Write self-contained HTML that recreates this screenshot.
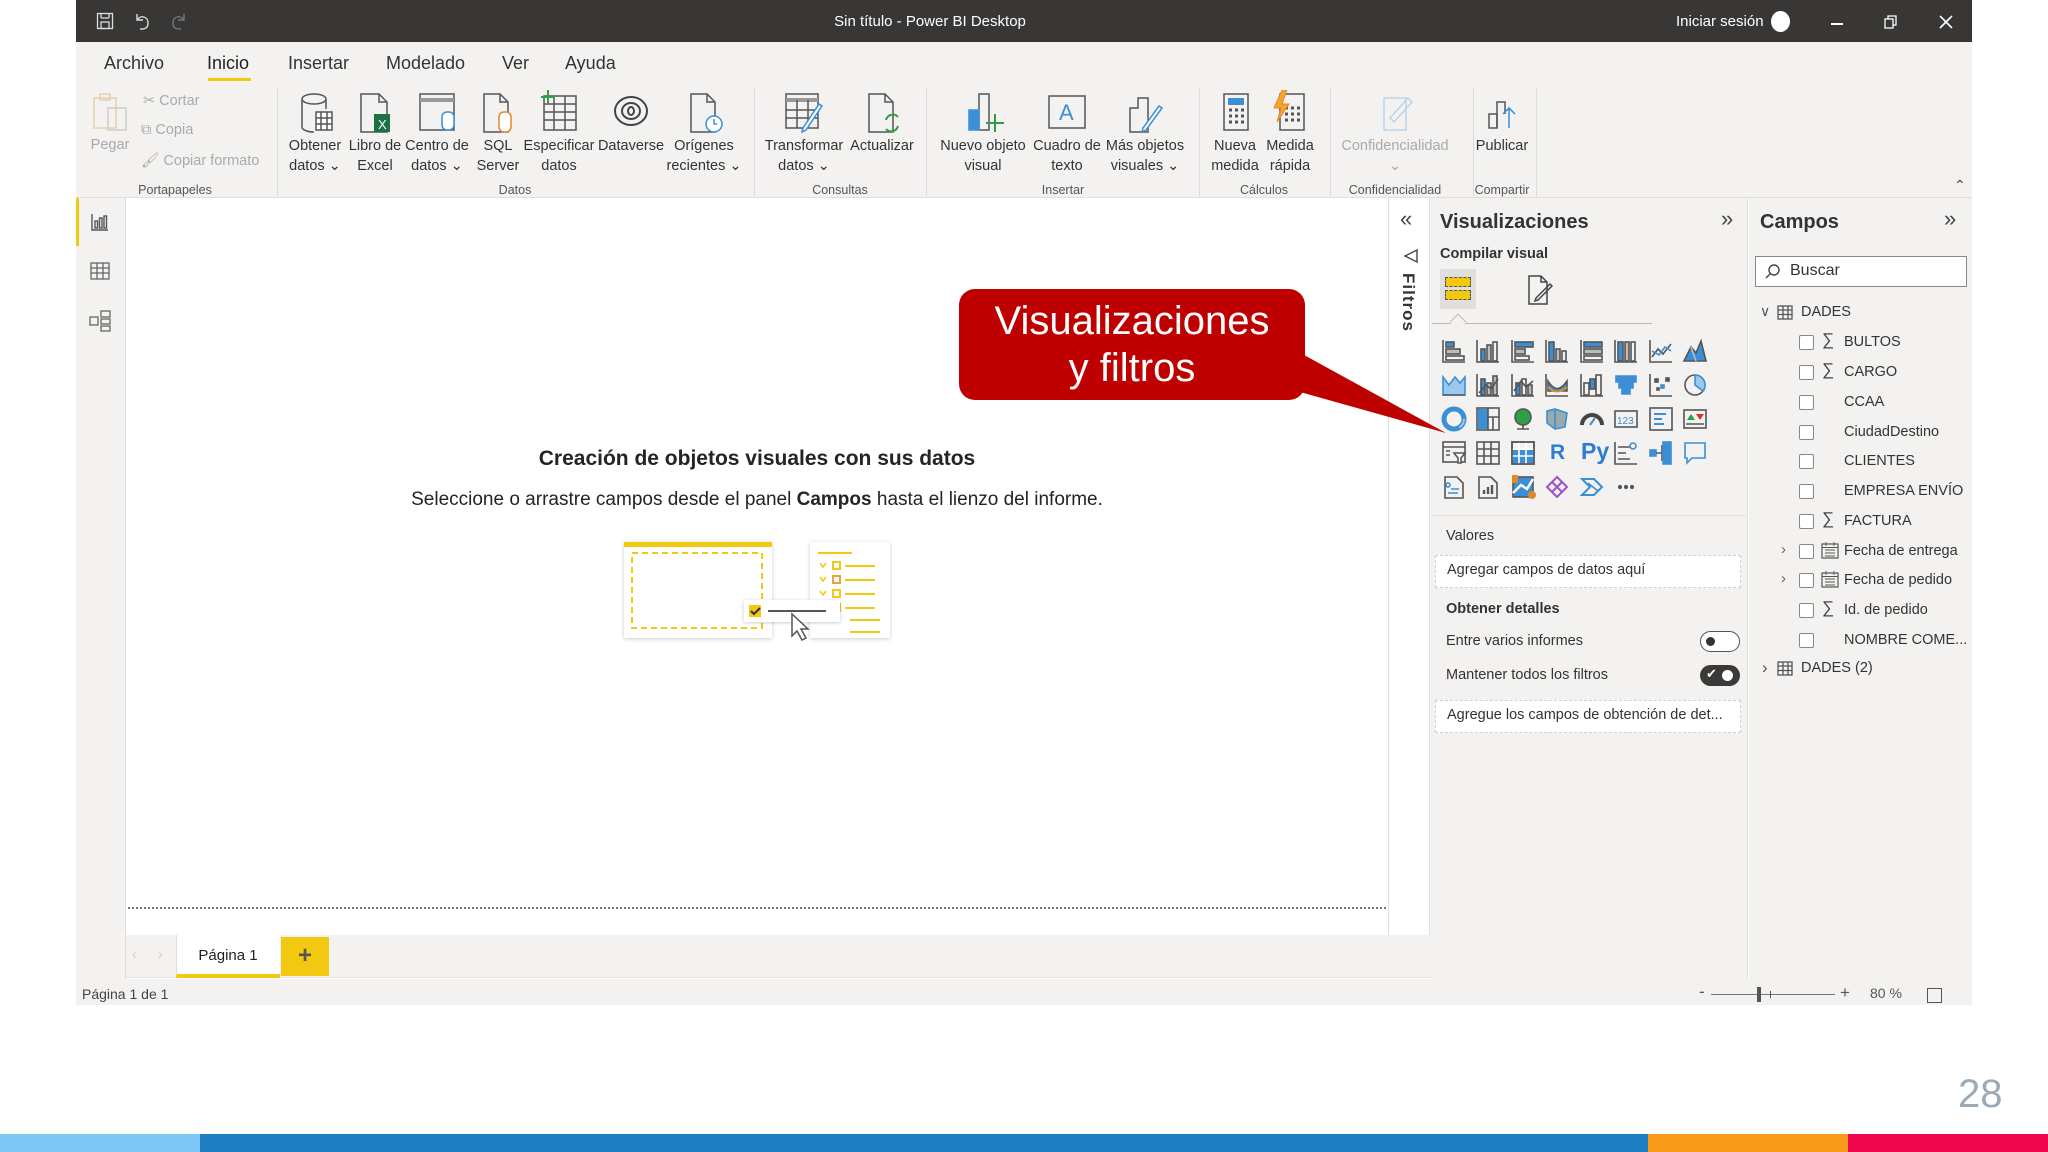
<!DOCTYPE html>
<html><head><meta charset="utf-8">
<style>
*{margin:0;padding:0;box-sizing:border-box}
body{width:2048px;height:1152px;background:#fff;position:relative;overflow:hidden;font-family:"Liberation Sans",sans-serif;color:#252423}
.a{position:absolute}
.t{position:absolute;white-space:nowrap}
.rb{position:absolute;text-align:center;font-size:14.5px;line-height:20px;color:#333;white-space:nowrap;transform:translateX(-50%)}
.gl{position:absolute;font-size:12.5px;color:#555;transform:translateX(-50%);white-space:nowrap}
.sep{position:absolute;top:88px;width:1px;height:108px;background:#dcdcdc}
.cb{position:absolute;left:1799px;width:15px;height:15px;border:1.3px solid #8a8886;border-radius:2px;background:#fff}
.fl{position:absolute;left:1844px;font-size:14.5px;color:#333}
.sg{position:absolute;left:1822px;font-size:17px;color:#444}
</style></head><body>

<div class="a" style="left:76px;top:0;width:1896px;height:42px;background:#383736"></div>
<svg class="a" style="left:96px;top:12px" width="18" height="18" viewBox="0 0 18 18" fill="none" stroke="#ddd" stroke-width="1.3"><rect x="1.5" y="1.5" width="15" height="15"/><rect x="5" y="10" width="8" height="6.5"/><line x1="5" y1="1.5" x2="5" y2="6"/><line x1="13" y1="1.5" x2="13" y2="6"/><line x1="5" y1="6" x2="13" y2="6"/></svg>
<svg class="a" style="left:133px;top:11px" width="18" height="20" viewBox="0 0 18 20" fill="none" stroke="#ddd" stroke-width="1.4"><path d="M4 3v6h6"/><path d="M4 9c3-5 11-4 11 3s-6 6-8 6"/></svg>
<svg class="a" style="left:170px;top:11px" width="18" height="20" viewBox="0 0 18 20" fill="none" stroke="#777" stroke-width="1.4"><path d="M14 3v6H8"/><path d="M14 9c-3-5-11-4-11 3s6 6 8 6"/></svg>
<div class="t" style="left:0;width:1860px;text-align:center;top:13px;font-size:15px;color:#fff">Sin título - Power BI Desktop</div>
<div class="t" style="left:1676px;top:13px;font-size:15px;color:#fff">Iniciar sesión</div>
<div class="a" style="left:1771px;top:11px;width:19px;height:21px;border-radius:50%;background:#fff"></div>
<div class="a" style="left:1831px;top:23px;width:12px;height:1.5px;background:#fff"></div>
<svg class="a" style="left:1884px;top:15px" width="14" height="14" viewBox="0 0 14 14" fill="none" stroke="#fff" stroke-width="1.3"><rect x="1" y="4" width="8" height="9"/><path d="M4 4V1h8v9H9"/></svg>
<svg class="a" style="left:1939px;top:15px" width="14" height="14" viewBox="0 0 14 14" stroke="#fff" stroke-width="1.6"><path d="M1 1l12 12M13 1L1 13"/></svg>

<div class="a" style="left:76px;top:42px;width:1896px;height:156px;background:#f3f2f1;border-bottom:1px solid #e1dfdd"></div>
<div class="t" style="left:104px;top:53px;font-size:18px;color:#333">Archivo</div>
<div class="t" style="left:207px;top:53px;font-size:18px;color:#222">Inicio</div>
<div class="a" style="left:208px;top:78px;width:43px;height:3px;background:#f2c811"></div>
<div class="t" style="left:288px;top:53px;font-size:18px;color:#333">Insertar</div>
<div class="t" style="left:386px;top:53px;font-size:18px;color:#333">Modelado</div>
<div class="t" style="left:502px;top:53px;font-size:18px;color:#333">Ver</div>
<div class="t" style="left:565px;top:53px;font-size:18px;color:#333">Ayuda</div>

<svg class="a" style="left:90px;top:92px" width="40" height="40" viewBox="0 0 40 40" fill="none" stroke="#e8cfae" stroke-width="1.5"><rect x="4" y="6" width="22" height="30"/><rect x="10" y="2" width="10" height="6"/><rect x="18" y="16" width="18" height="22" stroke="#ccc"/></svg>
<div class="rb" style="left:110px;top:135px;color:#aaa">Pegar</div>
<div class="t" style="left:143px;top:93px;font-size:14.5px;color:#aaa">✂ Cortar</div>
<div class="t" style="left:141px;top:122px;font-size:14.5px;color:#aaa">⧉ Copia</div>
<div class="t" style="left:141px;top:152px;font-size:14.5px;color:#aaa">🖌 Copiar formato</div>
<div class="gl" style="left:175px;top:183px">Portapapeles</div>
<div class="sep" style="left:277px"></div>

<svg class="a" style="left:298px;top:92px" width="40" height="42" viewBox="0 0 40 42" fill="none" stroke="#555" stroke-width="1.5"><ellipse cx="16" cy="7" rx="12" ry="5"/><path d="M4 7v28c0 3 6 5 12 5M28 7v10"/><rect x="18" y="20" width="16" height="18" fill="#fff"/><path d="M18 26h16M18 32h16M23 20v18M29 20v18"/></svg>
<div class="rb" style="left:315px;top:136px">Obtener<br>datos ⌄</div>
<svg class="a" style="left:358px;top:92px" width="36" height="42" viewBox="0 0 36 42" fill="none" stroke="#555" stroke-width="1.5"><path d="M3 2h18l8 8v30H3z"/><path d="M21 2v8h8"/><rect x="16" y="22" width="16" height="18" fill="#1e7145" stroke="none"/><text x="20" y="37" font-size="13" fill="#fff" stroke="none" font-family="Liberation Sans">X</text></svg>
<div class="rb" style="left:375px;top:136px">Libro de<br>Excel</div>
<svg class="a" style="left:418px;top:92px" width="40" height="42" viewBox="0 0 40 42" fill="none" stroke="#555" stroke-width="1.5"><rect x="2" y="2" width="34" height="36"/><path d="M2 8h34" stroke-width="4" stroke="#999"/><rect x="24" y="20" width="12" height="18" rx="5" stroke="#3a8fd6" fill="#fff"/></svg>
<div class="rb" style="left:437px;top:136px">Centro de<br>datos ⌄</div>
<svg class="a" style="left:481px;top:92px" width="36" height="42" viewBox="0 0 36 42" fill="none" stroke="#555" stroke-width="1.5"><path d="M3 2h16l8 8v30H3z"/><path d="M19 2v8h8"/><rect x="18" y="20" width="12" height="20" rx="5" stroke="#e08a2c" fill="#fff"/></svg>
<div class="rb" style="left:498px;top:136px">SQL<br>Server</div>
<svg class="a" style="left:540px;top:90px" width="40" height="44" viewBox="0 0 40 44" fill="none" stroke="#555" stroke-width="1.5"><rect x="4" y="6" width="32" height="34"/><path d="M4 14h32M4 22h32M4 30h32M14 6v34M25 6v34"/><path d="M8 0v14M1 7h14" stroke="#2f9e44" stroke-width="2"/></svg>
<div class="rb" style="left:559px;top:136px">Especificar<br>datos</div>
<svg class="a" style="left:612px;top:94px" width="38" height="34" viewBox="0 0 38 34" fill="none" stroke="#444" stroke-width="2"><ellipse cx="19" cy="17" rx="16" ry="14"/><ellipse cx="19" cy="17" rx="9" ry="8"/><ellipse cx="19" cy="17" rx="3" ry="4"/></svg>
<div class="rb" style="left:631px;top:136px">Dataverse</div>
<svg class="a" style="left:688px;top:92px" width="36" height="42" viewBox="0 0 36 42" fill="none" stroke="#555" stroke-width="1.5"><path d="M3 2h16l8 8v30H3z"/><path d="M19 2v8h8"/><circle cx="26" cy="32" r="8" stroke="#3a8fd6" fill="#fff"/><path d="M26 27v5h3" stroke="#3a8fd6"/></svg>
<div class="rb" style="left:704px;top:136px">Orígenes<br>recientes ⌄</div>
<div class="sep" style="left:754px"></div>

<svg class="a" style="left:784px;top:92px" width="42" height="42" viewBox="0 0 42 42" fill="none" stroke="#555" stroke-width="1.5"><rect x="2" y="2" width="32" height="34"/><path d="M2 8h32" stroke-width="4" stroke="#999"/><path d="M2 18h32M2 26h32M13 8v28M24 8v28"/><path d="M38 14L22 38l-4 2 1-4 16-24z" stroke="#3a8fd6" fill="#fff"/></svg>
<div class="rb" style="left:804px;top:136px">Transformar<br>datos ⌄</div>
<svg class="a" style="left:866px;top:92px" width="36" height="42" viewBox="0 0 36 42" fill="none" stroke="#555" stroke-width="1.5"><path d="M3 2h16l8 8v30H3z"/><path d="M19 2v8h8"/><path d="M20 28a7 7 0 0 1 12-3M32 34a7 7 0 0 1-12 3" stroke="#2f9e44" stroke-width="2"/></svg>
<div class="rb" style="left:882px;top:136px">Actualizar</div>
<div class="sep" style="left:926px"></div>

<svg class="a" style="left:965px;top:92px" width="40" height="42" viewBox="0 0 40 42" fill="none" stroke="#555" stroke-width="1.5"><rect x="14" y="2" width="10" height="36"/><rect x="4" y="18" width="10" height="20" fill="#3a8fd6" stroke="#3a8fd6"/><path d="M30 22v18M21 31h18" stroke="#2f9e44" stroke-width="2"/></svg>
<div class="rb" style="left:983px;top:136px">Nuevo objeto<br>visual</div>
<svg class="a" style="left:1047px;top:94px" width="40" height="36" viewBox="0 0 40 36" fill="none" stroke="#555" stroke-width="1.5"><rect x="2" y="2" width="36" height="32"/><text x="12" y="26" font-size="22" fill="#3a8fd6" stroke="none" font-family="Liberation Sans">A</text></svg>
<div class="rb" style="left:1067px;top:136px">Cuadro de<br>texto</div>
<svg class="a" style="left:1126px;top:92px" width="40" height="42" viewBox="0 0 40 42" fill="none" stroke="#555" stroke-width="1.5"><path d="M4 40V16h8V6h10v34z"/><path d="M36 16L20 38l-4 2 1-4 16-22z" stroke="#3a8fd6" fill="#fff"/></svg>
<div class="rb" style="left:1145px;top:136px">Más objetos<br>visuales ⌄</div>
<div class="sep" style="left:1199px"></div>

<svg class="a" style="left:1222px;top:92px" width="28" height="40" viewBox="0 0 28 40" fill="none" stroke="#555" stroke-width="1.5"><rect x="2" y="2" width="24" height="36"/><rect x="6" y="6" width="16" height="7" fill="#3a8fd6" stroke="none"/><path d="M7 18h3M13 18h3M19 18h3M7 24h3M13 24h3M19 24h3M7 30h3M13 30h3M19 30h3" stroke-width="3"/></svg>
<div class="rb" style="left:1235px;top:136px">Nueva<br>medida</div>
<svg class="a" style="left:1272px;top:90px" width="34" height="42" viewBox="0 0 34 42" fill="none" stroke="#555" stroke-width="1.5"><rect x="8" y="4" width="24" height="36"/><path d="M13 18h3M19 18h3M25 18h3M13 24h3M19 24h3M25 24h3M13 30h3M19 30h3M25 30h3" stroke-width="3"/><path d="M10 0L2 18h7L5 32l12-18h-7l5-14z" fill="#f4a32c" stroke="#e08a2c" stroke-width="1"/></svg>
<div class="rb" style="left:1290px;top:136px">Medida<br>rápida</div>
<div class="sep" style="left:1330px"></div>

<svg class="a" style="left:1380px;top:92px" width="36" height="40" viewBox="0 0 36 40" fill="none" stroke="#b9d3ea" stroke-width="1.5"><rect x="4" y="6" width="22" height="32"/><path d="M10 26l18-20 4 4-18 20z"/></svg>
<div class="rb" style="left:1395px;top:136px;color:#aaa">Confidencialidad<br>⌄</div>
<div class="sep" style="left:1473px"></div>
<svg class="a" style="left:1487px;top:92px" width="32" height="40" viewBox="0 0 32 40" fill="none" stroke="#555" stroke-width="1.5"><rect x="2" y="22" width="8" height="14"/><path d="M10 36V10h8v12"/><path d="M22 36V16M16 22l6-6 6 6" stroke="#3a8fd6"/></svg>
<div class="rb" style="left:1502px;top:136px">Publicar</div>
<div class="sep" style="left:1536px"></div>
<div class="gl" style="left:515px;top:183px">Datos</div>
<div class="gl" style="left:840px;top:183px">Consultas</div>
<div class="gl" style="left:1063px;top:183px">Insertar</div>
<div class="gl" style="left:1264px;top:183px">Cálculos</div>
<div class="gl" style="left:1395px;top:183px">Confidencialidad</div>
<div class="gl" style="left:1502px;top:183px">Compartir</div>
<div class="t" style="left:1954px;top:177px;font-size:14px;color:#444">⌃</div>

<div class="a" style="left:76px;top:198px;width:50px;height:782px;background:#f3f2f1;border-right:1px solid #e1dfdd"></div>
<div class="a" style="left:76px;top:198px;width:3px;height:48px;background:#f2c811"></div>
<svg class="a" style="left:91px;top:213px" width="18" height="18" viewBox="0 0 18 18" fill="none" stroke="#555" stroke-width="1.4"><path d="M1 1v16h16"/><rect x="4" y="8" width="2.5" height="7"/><rect x="8.5" y="5" width="2.5" height="10"/><rect x="13" y="3" width="2.5" height="12"/></svg>
<svg class="a" style="left:90px;top:262px" width="20" height="18" viewBox="0 0 20 18" fill="none" stroke="#666" stroke-width="1.3"><rect x="1" y="1" width="18" height="16"/><path d="M1 6h18M1 11h18M7 1v16M13 1v16"/></svg>
<svg class="a" style="left:89px;top:310px" width="22" height="22" viewBox="0 0 22 22" fill="none" stroke="#666" stroke-width="1.3"><rect x="1" y="7" width="8" height="8"/><rect x="12" y="1" width="9" height="6"/><rect x="12" y="9" width="9" height="5"/><rect x="12" y="16" width="9" height="5"/></svg>

<div class="a" style="left:126px;top:198px;width:1262px;height:737px;background:#fff"></div>
<div class="a" style="left:128px;top:907px;width:1258px;border-top:2px dotted #777"></div>
<div class="t" style="left:126px;width:1262px;text-align:center;top:447px;font-size:21px;font-weight:bold;color:#252423">Creación de objetos visuales con sus datos</div>
<div class="t" style="left:126px;width:1262px;text-align:center;top:489px;font-size:19px;color:#252423">Seleccione o arrastre campos desde el panel <b>Campos</b> hasta el lienzo del informe.</div>
<svg class="a" style="left:620px;top:536px" width="272" height="112" viewBox="0 0 272 112">
<defs><filter id="sh"><feDropShadow dx="0" dy="1" stdDeviation="2" flood-opacity=".2"/></filter></defs>
<rect x="4" y="6" width="148" height="96" fill="#fff" filter="url(#sh)"/>
<rect x="4" y="6" width="148" height="5" fill="#f2c811"/>
<rect x="12" y="17" width="130" height="75" fill="none" stroke="#f2c811" stroke-width="2" stroke-dasharray="6 4"/>
<rect x="190" y="6" width="80" height="96" fill="#fff" filter="url(#sh)"/>
<path d="M198 17h34M225 30h30M225 44h30M225 58h30M225 72h30M230 84h30M230 96h30" stroke="#f2c811" stroke-width="2"/>
<rect x="213" y="26" width="7" height="7" fill="none" stroke="#f2c811" stroke-width="2"/><rect x="213" y="40" width="7" height="7" fill="none" stroke="#e8a33c" stroke-width="2"/><rect x="213" y="54" width="7" height="7" fill="none" stroke="#f2c811" stroke-width="2"/><rect x="213" y="68" width="7" height="7" fill="none" stroke="#f2c811" stroke-width="2"/>
<path d="M200 27l3 4 3-4M200 41l3 4 3-4M200 55l3 4 3-4M200 72l3-4 3 4" fill="none" stroke="#f2c811" stroke-width="1.5"/>
<rect x="124" y="64" width="96" height="22" fill="#fff" filter="url(#sh)"/>
<rect x="129" y="69" width="12" height="12" fill="#f2c811"/><path d="M131 75l3 3 6-6" stroke="#333" stroke-width="2" fill="none"/>
<path d="M148 75h58" stroke="#555" stroke-width="2"/>
<path d="M172 78v22l5-5 5 9 4-2-5-9h7z" fill="#fff" stroke="#555" stroke-width="1.5"/>
</svg>

<div class="a" style="left:1388px;top:198px;width:42px;height:737px;background:#fff;border-left:1px solid #e1dfdd;border-right:1px solid #e1dfdd"></div>
<div class="t" style="left:1400px;top:206px;font-size:22px;color:#444">«</div>
<svg class="a" style="left:1403px;top:248px" width="16" height="16" viewBox="0 0 16 16" fill="none" stroke="#444" stroke-width="1.4"><path d="M14 2L2 8l12 6z"/></svg>
<div class="t" style="left:1398px;top:273px;font-size:17px;font-weight:bold;color:#333;transform-origin:0 0;transform:rotate(90deg) translate(0,-20px);letter-spacing:1px">Filtros</div>

<div class="a" style="left:1430px;top:198px;width:318px;height:782px;background:#f3f2f1;border-right:1px solid #e1dfdd"></div>
<div class="t" style="left:1440px;top:211px;font-size:20px;font-weight:bold;color:#333">Visualizaciones</div>
<div class="t" style="left:1721px;top:206px;font-size:22px;color:#444">»</div>
<div class="t" style="left:1440px;top:246px;font-size:14.5px;font-weight:bold;color:#333">Compilar visual</div>
<div class="a" style="left:1440px;top:269px;width:36px;height:40px;background:#e1dfdd"></div>
<div class="a" style="left:1445px;top:277px;width:26px;height:10px;background:#f2c811;border:1px dashed #555"></div>
<div class="a" style="left:1445px;top:290px;width:26px;height:10px;background:#f2c811;border:1px dashed #555"></div>
<svg class="a" style="left:1526px;top:274px" width="30" height="32" viewBox="0 0 30 32" fill="none" stroke="#444" stroke-width="1.5"><path d="M3 2h12l6 6v22H3z"/><path d="M15 2v6h6"/><path d="M26 12L12 26l-3 1 1-3L24 10z"/></svg>
<div class="a" style="left:1432px;top:323px;width:220px;height:1px;background:#bbb"></div>
<div class="a" style="left:1452px;top:316px;width:12px;height:12px;background:#f3f2f1;border-left:1px solid #bbb;border-top:1px solid #bbb;transform:rotate(45deg)"></div>
<div class="a" style="left:1432px;top:515px;width:314px;height:1px;background:#e1dfdd"></div>

<svg class="a" style="left:1440px;top:337px" width="272" height="168" viewBox="0 0 272 168" fill="none" stroke="#555" stroke-width="1.6">
<g transform="translate(2,2)"><path d="M1 1v22h22"/><rect x="4" y="3" width="8" height="5" fill="#3a8fd6"/><rect x="4" y="10" width="14" height="5" fill="#bbb"/><rect x="4" y="17" width="18" height="4"/></g>
<g transform="translate(36,2)"><path d="M1 1v22h22"/><rect x="5" y="10" width="4" height="12" fill="#3a8fd6"/><rect x="11" y="6" width="4" height="16" fill="#bbb"/><rect x="17" y="3" width="4" height="19"/></g>
<g transform="translate(71,2)"><path d="M1 1v22h22"/><rect x="4" y="3" width="18" height="5" fill="#3a8fd6"/><rect x="4" y="10" width="10" height="5" fill="#bbb"/><rect x="4" y="17" width="14" height="4"/></g>
<g transform="translate(105,2)"><path d="M1 1v22h22"/><rect x="4" y="3" width="5" height="19" fill="#3a8fd6"/><rect x="11" y="10" width="4" height="12" fill="#bbb"/><rect x="17" y="12" width="4" height="10"/></g>
<g transform="translate(140,2)"><path d="M1 1v22h22"/><rect x="4" y="3" width="18" height="5" fill="#3a8fd6"/><rect x="4" y="10" width="18" height="5" fill="#bbb"/><rect x="4" y="17" width="18" height="4"/></g>
<g transform="translate(174,2)"><path d="M1 1v22h22"/><rect x="4" y="3" width="5" height="19" fill="#3a8fd6"/><rect x="11" y="3" width="4" height="19" fill="#bbb"/><rect x="17" y="3" width="4" height="19"/></g>
<g transform="translate(209,2)"><path d="M1 1v22h22"/><path d="M3 18l6-8 5 5 8-10" /><path d="M3 12l7 4 6-8 6 4" stroke="#3a8fd6"/></g>
<g transform="translate(243,2)"><path d="M1 22l7-14 5 6 5-12 5 20z" fill="#3a8fd6"/><path d="M8 8l5 14" stroke="#bbb"/></g>
<g transform="translate(2,36)"><path d="M1 22V4l6 8 6-8 5 6 5-6v18z" fill="#9cc8ee" stroke="#3a8fd6"/><path d="M1 22h22"/></g>
<g transform="translate(36,36)"><path d="M1 1v22h22"/><rect x="5" y="6" width="4" height="16" fill="#3a8fd6"/><rect x="11" y="10" width="4" height="12" fill="#bbb"/><rect x="17" y="3" width="4" height="19" fill="#bbb"/><path d="M3 20l7-8 5 4 7-10"/></g>
<g transform="translate(71,36)"><path d="M1 1v22h22"/><rect x="5" y="10" width="4" height="12" fill="#3a8fd6"/><rect x="11" y="6" width="4" height="16"/><rect x="17" y="12" width="4" height="10" fill="#bbb"/><path d="M3 18l7-10 5 6 7-6"/></g>
<g transform="translate(105,36)"><path d="M1 1v22h22"/><path d="M3 8c6 10 12 10 19 0v10H3z" fill="#3a8fd6"/><path d="M3 14c6 6 12 6 19 0" stroke="#e08a2c" stroke-width="2"/></g>
<g transform="translate(140,36)"><path d="M1 1v22h22"/><rect x="4" y="10" width="5" height="12"/><rect x="10" y="6" width="5" height="10" fill="#3a8fd6"/><rect x="16" y="2" width="5" height="20"/></g>
<g transform="translate(174,36)"><path d="M2 3h20v6H2zM5 9h14v6H5zM8 15h8v6H8z" fill="#3a8fd6" stroke="#3a8fd6"/></g>
<g transform="translate(209,36)"><path d="M1 1v22h22"/><rect x="6" y="6" width="3" height="3" fill="#555"/><rect x="12" y="12" width="3" height="3" fill="#3a8fd6" stroke="#3a8fd6"/><rect x="17" y="5" width="3" height="3" fill="#555"/><rect x="8" y="15" width="2" height="2"/></g>
<g transform="translate(243,36)"><circle cx="12" cy="12" r="10"/><path d="M12 2v10l8 6a10 10 0 0 0-8-16z" fill="#9cc8ee" stroke="#3a8fd6"/></g>
<g transform="translate(2,70)"><circle cx="12" cy="12" r="10" stroke="#3a8fd6" stroke-width="5"/><circle cx="12" cy="12" r="10" stroke="#9cc8ee" stroke-width="2" stroke-dasharray="10 60"/></g>
<g transform="translate(36,70)"><rect x="1" y="1" width="22" height="22"/><rect x="2" y="2" width="10" height="20" fill="#3a8fd6" stroke="none"/><path d="M12 1v22M12 10h11M17 10v13"/></g>
<g transform="translate(71,70)"><circle cx="12" cy="10" r="8" fill="#2f9e44" stroke="#555"/><path d="M6 22h12M12 18v4"/></g>
<g transform="translate(105,70)"><path d="M2 4l8-2 12 4-2 14-10 2-8-6z" fill="#9aa" stroke="#3a8fd6"/><path d="M10 2v20" stroke="#3a8fd6"/></g>
<g transform="translate(140,70)"><path d="M2 18a10 10 0 0 1 20 0" stroke="#444" stroke-width="4"/><path d="M10 18l5-7" stroke="#3a8fd6" stroke-width="2"/></g>
<g transform="translate(174,70)"><rect x="1" y="4" width="22" height="16"/><text x="3" y="17" font-size="10" fill="#3a8fd6" stroke="none" font-family="Liberation Sans">123</text></g>
<g transform="translate(209,70)"><rect x="1" y="1" width="22" height="22"/><path d="M5 7h12M5 12h8M5 17h10" stroke="#3a8fd6" stroke-width="2"/></g>
<g transform="translate(243,70)"><rect x="1" y="3" width="22" height="18"/><path d="M4 13l4-6 4 6z" fill="#2f9e44" stroke="none"/><path d="M13 7h8l-4 6z" fill="#e03030" stroke="none"/><path d="M3 17h18"/></g>
<g transform="translate(2,104)"><rect x="1" y="1" width="22" height="20"/><path d="M1 6h22"/><path d="M12 12h11l-4 5v5h-3v-5z" fill="#fff"/><path d="M4 10h4M4 14h4"/></g>
<g transform="translate(36,104)"><rect x="1" y="1" width="22" height="22"/><path d="M1 8h22M1 15h22M8 1v22M15 1v22"/></g>
<g transform="translate(71,104)"><rect x="1" y="1" width="22" height="22"/><rect x="2" y="9" width="20" height="13" fill="#3a8fd6" stroke="none"/><path d="M1 8h22M1 15h22M8 1v22M15 1v22" stroke="#fff"/><rect x="1" y="1" width="22" height="22"/></g>
<g transform="translate(174,104)"><path d="M1 1v22h22"/><path d="M4 6h12M4 12h8M4 18h12"/><circle cx="19" cy="5" r="3" stroke="#3a8fd6"/></g>
<g transform="translate(209,104)"><rect x="1" y="9" width="6" height="6" fill="#3a8fd6" stroke="#3a8fd6"/><path d="M7 12h6M13 4v16"/><rect x="14" y="1" width="8" height="7" fill="#3a8fd6" stroke="#3a8fd6"/><rect x="14" y="9" width="8" height="6" fill="#3a8fd6" stroke="#3a8fd6"/><rect x="14" y="16" width="8" height="7" fill="#3a8fd6" stroke="#3a8fd6"/></g>
<g transform="translate(243,104)"><path d="M2 2h20v15H9l-5 5v-5H2z" stroke="#3a8fd6"/></g>
<g transform="translate(2,138)"><path d="M3 2h12l6 6v15H3z"/><circle cx="6" cy="10" r="2" stroke="#3a8fd6"/><path d="M9 14h8M6 18h10" stroke="#3a8fd6"/></g>
<g transform="translate(36,138)"><path d="M3 2h12l6 6v15H3z"/><path d="M8 19v-4M12 19v-7M16 19v-9" stroke-width="2.4"/></g>
<g transform="translate(71,138)"><rect x="2" y="2" width="20" height="20" fill="#3a8fd6" stroke="#555"/><path d="M2 18l8-8 6 4 6-10" stroke="#fff" stroke-width="2.5"/><rect x="1" y="0" width="6" height="8" fill="#e08a2c" stroke="none"/><circle cx="21" cy="20" r="4" fill="#e08a2c" stroke="none"/></g>
<g transform="translate(105,138)"><path d="M12 2l10 10-10 10L2 12z" stroke="#a14fc9" stroke-width="2"/><path d="M7 7l10 10M17 7L7 17" stroke="#a14fc9" stroke-width="2"/></g>
<g transform="translate(140,138)"><path d="M2 4h12l8 8-8 8H2l8-8z" stroke="#3a8fd6" stroke-width="2"/><path d="M8 8l10 8" stroke="#3a8fd6"/></g>
<g transform="translate(174,138)"><circle cx="6" cy="12" r="1.3" fill="#555"/><circle cx="12" cy="12" r="1.3" fill="#555"/><circle cx="18" cy="12" r="1.3" fill="#555"/></g>
</svg>
<div class="t" style="left:1550px;top:441px;font-size:21px;font-weight:bold;color:#2b7cd3">R</div>
<div class="t" style="left:1581px;top:438px;font-size:23px;font-weight:bold;color:#2b7cd3">Py</div>

<div class="t" style="left:1446px;top:528px;font-size:14.5px;color:#333">Valores</div>
<div class="a" style="left:1435px;top:555px;width:306px;height:33px;background:#fff;border:1px dashed #d0d0d0"></div>
<div class="t" style="left:1447px;top:562px;font-size:14.5px;color:#333">Agregar campos de datos aquí</div>
<div class="t" style="left:1446px;top:601px;font-size:14.5px;font-weight:bold;color:#333">Obtener detalles</div>
<div class="t" style="left:1446px;top:633px;font-size:14.5px;color:#333">Entre varios informes</div>
<div class="a" style="left:1700px;top:631px;width:40px;height:21px;border-radius:11px;border:1.3px solid #555;background:#fff"></div>
<div class="a" style="left:1706px;top:637px;width:9px;height:9px;border-radius:50%;background:#333"></div>
<div class="t" style="left:1446px;top:667px;font-size:14.5px;color:#333">Mantener todos los filtros</div>
<div class="a" style="left:1700px;top:665px;width:40px;height:21px;border-radius:11px;background:#3b3a39"></div>
<div class="t" style="left:1706px;top:666px;font-size:13px;color:#fff">✔</div>
<div class="a" style="left:1722px;top:670px;width:11px;height:11px;border-radius:50%;background:#fff"></div>
<div class="a" style="left:1435px;top:700px;width:306px;height:33px;background:#fff;border:1px dashed #d0d0d0"></div>
<div class="t" style="left:1447px;top:707px;font-size:14.5px;color:#333">Agregue los campos de obtención de det...</div>

<div class="a" style="left:1749px;top:198px;width:223px;height:782px;background:#f3f2f1"></div>
<div class="t" style="left:1760px;top:211px;font-size:20px;font-weight:bold;color:#333">Campos</div>
<div class="t" style="left:1944px;top:206px;font-size:22px;color:#444">»</div>
<div class="a" style="left:1755px;top:256px;width:212px;height:31px;background:#fff;border:1px solid #8a8886"></div>
<svg class="a" style="left:1764px;top:263px" width="17" height="17" viewBox="0 0 17 17" fill="none" stroke="#444" stroke-width="1.4"><circle cx="10" cy="7" r="5"/><path d="M6.5 10.5L2 15"/></svg>
<div class="t" style="left:1790px;top:262px;font-size:16px;color:#333">Buscar</div>

<div class="t" style="left:1760px;top:303px;font-size:14px;color:#555">∨</div>
<svg class="a" style="left:1777px;top:305px" width="16" height="15" viewBox="0 0 16 15" fill="none" stroke="#555" stroke-width="1.3"><rect x="1" y="1" width="14" height="13"/><path d="M1 5h14M1 9.5h14M6 1v13M11 1v13"/></svg>
<div class="t" style="left:1801px;top:304px;font-size:14.5px;color:#333">DADES</div>

<div class="cb" style="top:335px"></div><div class="sg" style="top:330px">∑</div><div class="fl" style="top:334px">BULTOS</div>
<div class="cb" style="top:365px"></div><div class="sg" style="top:360px">∑</div><div class="fl" style="top:364px">CARGO</div>
<div class="cb" style="top:395px"></div><div class="fl" style="top:394px">CCAA</div>
<div class="cb" style="top:425px"></div><div class="fl" style="top:424px">CiudadDestino</div>
<div class="cb" style="top:454px"></div><div class="fl" style="top:453px">CLIENTES</div>
<div class="cb" style="top:484px"></div><div class="fl" style="top:483px">EMPRESA ENVÍO</div>
<div class="cb" style="top:514px"></div><div class="sg" style="top:509px">∑</div><div class="fl" style="top:513px">FACTURA</div>
<div class="t" style="left:1781px;top:541px;font-size:15px;color:#666">›</div>
<div class="cb" style="top:544px"></div>
<svg class="a" style="left:1821px;top:541px" width="18" height="18" viewBox="0 0 18 18" fill="none" stroke="#555" stroke-width="1.2"><rect x="1" y="3" width="16" height="14"/><path d="M1 6.5h16M5 1v4M13 1v4M4 9h10M4 12h10M4 15h10" stroke-width="0.9"/></svg>
<div class="fl" style="top:543px">Fecha de entrega</div>
<div class="t" style="left:1781px;top:570px;font-size:15px;color:#666">›</div>
<div class="cb" style="top:573px"></div>
<svg class="a" style="left:1821px;top:570px" width="18" height="18" viewBox="0 0 18 18" fill="none" stroke="#555" stroke-width="1.2"><rect x="1" y="3" width="16" height="14"/><path d="M1 6.5h16M5 1v4M13 1v4M4 9h10M4 12h10M4 15h10" stroke-width="0.9"/></svg>
<div class="fl" style="top:572px">Fecha de pedido</div>
<div class="cb" style="top:603px"></div><div class="sg" style="top:598px">∑</div><div class="fl" style="top:602px">Id. de pedido</div>
<div class="cb" style="top:633px"></div><div class="fl" style="top:632px">NOMBRE COME...</div>
<div class="t" style="left:1762px;top:658px;font-size:17px;color:#555">›</div>
<svg class="a" style="left:1777px;top:661px" width="16" height="15" viewBox="0 0 16 15" fill="none" stroke="#555" stroke-width="1.3"><rect x="1" y="1" width="14" height="13"/><path d="M1 5h14M1 9.5h14M6 1v13M11 1v13"/></svg>
<div class="t" style="left:1801px;top:660px;font-size:14.5px;color:#333">DADES (2)</div>

<div class="a" style="left:126px;top:935px;width:1304px;height:43px;background:#f3f2f1;border-bottom:1px solid #e1dfdd"></div>
<div class="t" style="left:132px;top:946px;font-size:14px;color:#ccc">‹</div>
<div class="t" style="left:158px;top:946px;font-size:14px;color:#ccc">›</div>
<div class="a" style="left:176px;top:935px;width:104px;height:43px;background:#fff;border-left:1px solid #e1dfdd;border-bottom:4px solid #f2c811"></div>
<div class="t" style="left:176px;width:104px;text-align:center;top:947px;font-size:15px;color:#222">Página 1</div>
<div class="a" style="left:281px;top:937px;width:48px;height:39px;background:#f2c811"></div>
<div class="t" style="left:281px;width:48px;text-align:center;top:942px;font-size:24px;font-weight:bold;color:#555">+</div>
<div class="a" style="left:76px;top:979px;width:1896px;height:26px;background:#f3f2f1"></div>
<div class="t" style="left:82px;top:986px;font-size:14px;color:#444">Página 1 de 1</div>
<div class="t" style="left:1699px;top:982px;font-size:17px;color:#555">-</div>
<div class="a" style="left:1711px;top:994px;width:124px;height:1px;background:#777"></div>
<div class="a" style="left:1757px;top:987px;width:4px;height:15px;background:#555"></div>
<div class="a" style="left:1770px;top:991px;width:1px;height:7px;background:#555"></div>
<div class="t" style="left:1840px;top:983px;font-size:17px;color:#555">+</div>
<div class="t" style="left:1870px;top:985px;font-size:14px;color:#555">80 %</div>
<div class="a" style="left:1927px;top:988px;width:15px;height:15px;border:1.5px solid #555"></div>

<div class="t" style="left:1958px;top:1072px;font-size:40px;color:#9aaab7">28</div>

<div class="a" style="left:0;top:1134px;width:200px;height:18px;background:#7ec8f8"></div>
<div class="a" style="left:200px;top:1134px;width:1448px;height:18px;background:#1f7fc4"></div>
<div class="a" style="left:1648px;top:1134px;width:200px;height:18px;background:#fa9a1a"></div>
<div class="a" style="left:1848px;top:1134px;width:200px;height:18px;background:#f0064f"></div>

<!-- callout on top -->
<svg class="a" style="left:950px;top:280px" width="510" height="170" viewBox="950 280 510 170"><polygon points="1295,350 1300,392 1446,433" fill="#bf0000"/><rect x="959" y="289" width="346" height="111" rx="16" fill="#bf0000"/></svg>
<div class="t" style="left:959px;width:346px;text-align:center;top:298px;font-size:40px;line-height:47px;color:#fff">Visualizaciones<br>y filtros</div>
</body></html>
